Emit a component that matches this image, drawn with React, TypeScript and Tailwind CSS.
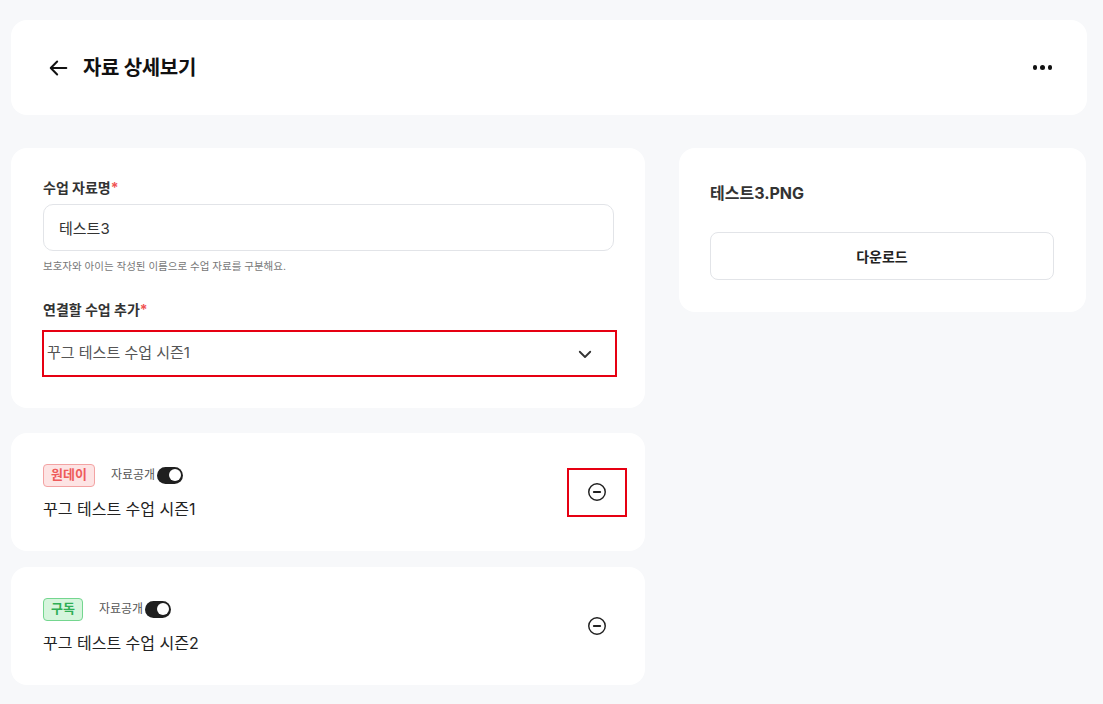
import React, { useState } from 'react';

const font = { fontFamily: '"Inter", "Noto Sans CJK KR", sans-serif' };

interface LessonItem {
    id: number;
    type: 'oneday' | 'subscribe';
    title: string;
    isPublic: boolean;
    highlighted?: boolean;
}

const ArrowLeft = () => (
    <svg width="22" height="22" viewBox="0 0 24 24" fill="none" stroke="#111" strokeWidth="2.2" strokeLinecap="round" strokeLinejoin="round">
        <path d="M20 12H4" />
        <path d="M10 5l-7 7 7 7" />
    </svg>
);

const ChevronDown = () => (
    <svg width="18" height="18" viewBox="0 0 24 24" fill="none" stroke="#333" strokeWidth="2.4" strokeLinecap="round" strokeLinejoin="round">
        <path d="M5 9l7 7 7-7" />
    </svg>
);

const MinusCircle = () => (
    <svg width="22" height="22" viewBox="0 0 24 24" fill="none" stroke="#222" strokeWidth="1.6">
        <circle cx="12" cy="12" r="9" />
        <path d="M8.5 12h7" strokeWidth="2" strokeLinecap="round" />
    </svg>
);

const Toggle = ({ on }: { on: boolean }) => (
    <span className={`ml-[2px] inline-flex items-center w-[26px] h-[17px] rounded-full px-[2px] ${on ? 'bg-[#1f1f1f] justify-end' : 'bg-gray-300 justify-start'}`}>
        <span className="w-[12px] h-[12px] rounded-full bg-white" />
    </span>
);

const LessonCard = ({ item }: { item: LessonItem }) => {
    const badge = item.type === 'oneday'
        ? <span className="h-[23px] px-[7px] flex items-center rounded-[4px] border border-[#f3a3a3] bg-[#fde4e4] text-[#ee5b5b] text-[13px] font-bold">원데이</span>
        : <span className="h-[23px] px-[7px] flex items-center rounded-[4px] border border-[#74d68f] bg-[#d6f5dd] text-[#2fae55] text-[13px] font-bold">구독</span>;

    return (
        <div className="bg-white rounded-2xl h-[118px] pl-8 pr-[18px] flex items-center justify-between">
            <div className="flex flex-col gap-[10px]">
                <div className="flex items-center">
                    {badge}
                    <span className="ml-4 text-[12px] text-[#555]">자료공개</span>
                    <Toggle on={item.isPublic} />
                </div>
                <div className="text-[16px] text-[#222] leading-6">{item.title}</div>
            </div>
            <button className={`w-[60px] h-[49px] flex items-center justify-center ${item.highlighted ? 'border-2 border-[#e60012]' : 'border-2 border-transparent'}`}>
                <MinusCircle />
            </button>
        </div>
    );
};

export default function App() {
    const [name, setName] = useState('테스트3');
    const items: LessonItem[] = [
        { id: 1, type: 'oneday', title: '꾸그 테스트 수업 시즌1', isPublic: true, highlighted: true },
        { id: 2, type: 'subscribe', title: '꾸그 테스트 수업 시즌2', isPublic: true },
    ];

    return (
        <div className="min-h-[704px] bg-[#f7f8fa] pl-[11px] pr-[16px] pt-[20px] pb-4" style={font}>
            {/* header */}
            <div className="bg-white rounded-2xl h-[95px] flex items-center justify-between pl-[37px] pr-[35px]">
                <div className="flex items-center gap-[13px]">
                    <ArrowLeft />
                    <h1 className="text-[20px] font-bold text-[#111] tracking-[-0.3px]">자료 상세보기</h1>
                </div>
                <div className="flex items-center gap-[3px]">
                    <span className="w-[4.5px] h-[4.5px] rounded-full bg-[#111]" />
                    <span className="w-[4.5px] h-[4.5px] rounded-full bg-[#111]" />
                    <span className="w-[4.5px] h-[4.5px] rounded-full bg-[#111]" />
                </div>
            </div>

            <div className="flex gap-[34px] mt-[33px] items-start">
                {/* left column */}
                <div className="w-[634px] flex flex-col">
                    <div className="bg-white rounded-2xl h-[260px] pl-8 pr-[29px] pt-[30px]">
                        <label className="block text-[14px] font-bold text-[#333] leading-5">
                            수업 자료명<span className="text-[#f05454]">*</span>
                        </label>
                        <input
                            value={name}
                            onChange={(e) => setName(e.target.value)}
                            className="mt-[6px] w-[571px] h-[47px] rounded-[10px] border border-[#e2e4e8] px-[15px] text-[15px] text-[#333] outline-none"
                        />
                        <p className="mt-[8px] text-[10.5px] text-[#777] leading-4">보호자와 아이는 작성된 이름으로 수업 자료를 구분해요.</p>
                        <label className="block mt-[25px] text-[14px] font-bold text-[#333] leading-5">
                            연결할 수업 추가<span className="text-[#f05454]">*</span>
                        </label>
                        <div className="mt-[10px] -ml-px w-[575px] h-[47px] border-2 border-[#e60012] flex items-center justify-between pl-[3px] pr-[21px]">
                            <span className="text-[15px] text-[#555]">꾸그 테스트 수업 시즌1</span>
                            <ChevronDown />
                        </div>
                    </div>

                    <div className="mt-[25px] flex flex-col gap-4">
                        {items.map((item) => (
                            <LessonCard key={item.id} item={item} />
                        ))}
                    </div>
                </div>

                {/* right column */}
                <div className="w-[407px] bg-white rounded-2xl h-[164px] pl-[31px] pr-[32px] pt-[33px]">
                    <div className="text-[16px] font-bold text-[#333] leading-6">테스트3.PNG</div>
                    <button className="mt-[27px] w-full h-[48px] rounded-[8px] border border-[#e2e4e8] text-[14px] font-semibold text-[#222]">
                        다운로드
                    </button>
                </div>
            </div>
        </div>
    );
}
